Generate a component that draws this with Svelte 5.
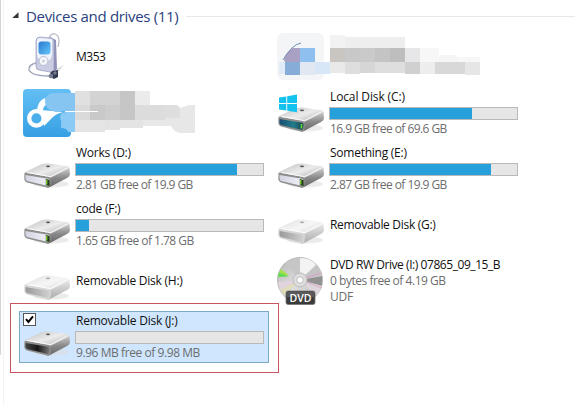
<script>
  const tiles = [
    { icon: 'player', name: 'M353', ls: -0.5 },
    { icon: 'hiddenA' },
    { icon: 'hiddenB' },
    { icon: 'system', name: 'Local Disk (C:)', ls: -0.12, used: 75.7, info: '16.9 GB free of 69.6 GB', infoLs: -0.56 },
    { icon: 'disk', name: 'Works (D:)', ls: -0.25, used: 86, info: '2.81 GB free of 19.9 GB', infoLs: -0.56 },
    { icon: 'disk', name: 'Something (E:)', ls: -0.25, used: 86, info: '2.87 GB free of 19.9 GB', infoLs: -0.56 },
    { icon: 'disk', name: 'code (F:)', ls: -0.25, used: 7, info: '1.65 GB free of 1.78 GB', infoLs: -0.52 },
    { icon: 'removable', name: 'Removable Disk (G:)', ls: -0.3 },
    { icon: 'removable', name: 'Removable Disk (H:)', ls: -0.25 },
    { icon: 'dvd', name: 'DVD RW Drive (I:) 07865_09_15_B', ls: -0.44, info: '0 bytes free of 4.19 GB', infoLs: -0.47, extra: 'UDF' },
    { icon: 'open', name: 'Removable Disk (J:)', ls: -0.22, used: 0, info: '9.96 MB free of 9.98 MB', infoLs: -0.43, selected: true }
  ];
  const mosaicA = [
    [53, 2, 15, 13, '#f2f2f2'], [68, 4, 60, 11, '#eeeeee'], [53, 15, 15, 14, '#c9c6c2'], [68, 15, 15, 14, '#c8c8c8'],
    [83, 15, 15, 14, '#cacaca'], [98, 15, 15, 14, '#c4c4c4'], [113, 15, 15, 14, '#bebebe'], [128, 15, 15, 14, '#e7e7ea'],
    [143, 15, 19, 14, '#f7f7f7'], [38, 29, 15, 12, '#d7e7f7'], [53, 29, 15, 11, '#e9e9e9'], [68, 29, 15, 12, '#dedede'],
    [83, 29, 15, 11, '#d6d6d6'], [98, 29, 30, 11, '#dedede'], [128, 29, 15, 12, '#d0d0d1'], [143, 29, 15, 12, '#ededed'],
    [158, 29, 30, 12, '#d8d8d8'], [188, 29, 15, 13, '#e6e6e6'], [162, 22, 18, 7, '#f5f5f5'], [180, 24, 23, 5, '#f7f7f7']
  ];
  const mosaicB = [
    [52, 2, 15, 14, '#e0e0e0'], [67, 2, 30, 14, '#d3d3d3'], [97, 2, 15, 29, '#c6c6c6'],
    [112, 2, 15, 14, '#ebebeb'], [52, 16, 15, 15, '#dadada'], [67, 16, 15, 15, '#c9c9c9'], [82, 16, 15, 15, '#cdcdcd'],
    [112, 16, 30, 15, '#dcdcdc'], [52, 31, 30, 12, '#e5e5e5'], [82, 31, 15, 10, '#e3e3e3'], [97, 31, 23, 8, '#e4e4e4'],
    [120, 31, 22, 6, '#e8e8e8']
  ];
</script>

{#snippet body(front, tone)}
  <ellipse cx="28" cy="39" rx="18" ry="3.5" fill="#ddd" opacity=".6" />
  <path d="M1 29Q1 27 4 26L18 19.5Q21 18 25 18.5L44 21Q46.5 21.5 46.5 24L28 34Z" fill="url(#top{tone})" />
  <path d="M46.5 23.5L47 29.5Q46.5 31.5 44 33L28 41.5Q26 43 24 42.5L27 33Z" fill="url(#side{tone})" />
  <path d="M1.5 28.5Q2 27.5 5 28L25 31.8Q28 32.5 28 35L27.5 40.5Q27 43 24 42.5L4 37.5Q1.5 37 1.3 34Z" fill={tone === 'L' ? '#d6d6d6' : '#8d8d8d'} />
  <path d="M2.5 30L25 33.8Q26.5 34 26.5 36L26 39.5Q26 41 24 40.8L4 36Q2.5 35.5 2.5 33Z" fill={front} />
  <path d="M4 27.5L26 31.4Q28 31.6 29 31L45 22.5" fill="none" stroke="#fff" stroke-width="1" opacity=".9" />
  <ellipse cx="25" cy="21.3" rx="2.1" ry=".9" fill={tone === 'L' ? '#aaa' : '#555'} />
{/snippet}

<svg class="defs" width="0" height="0">
  <defs>
    <linearGradient id="topD" x1="0" y1="0" x2="1" y2="1"><stop offset="0" stop-color="#bdbdbd" /><stop offset=".5" stop-color="#ececec" /><stop offset="1" stop-color="#a2a2a2" /></linearGradient>
    <linearGradient id="sideD" x1="0" y1="0" x2="0" y2="1"><stop offset="0" stop-color="#c9c9c9" /><stop offset=".5" stop-color="#888" /><stop offset="1" stop-color="#666" /></linearGradient>
    <linearGradient id="topL" x1="0" y1="0" x2="1" y2="1"><stop offset="0" stop-color="#dedede" /><stop offset=".5" stop-color="#f6f6f6" /><stop offset="1" stop-color="#d5d5d5" /></linearGradient>
    <linearGradient id="sideL" x1="0" y1="0" x2="0" y2="1"><stop offset="0" stop-color="#e6e6e6" /><stop offset="1" stop-color="#aaa" /></linearGradient>
    <linearGradient id="silver"><stop offset="0" stop-color="#d4d5e3" /><stop offset="1" stop-color="#f2f2f8" /></linearGradient>
    <linearGradient id="teal"><stop offset="0" stop-color="#184c72" /><stop offset=".6" stop-color="#217d8b" /><stop offset="1" stop-color="#143d48" /></linearGradient>
    <linearGradient id="slotL"><stop offset="0" stop-color="#999" /><stop offset="1" stop-color="#d0d0d0" /></linearGradient>
    <linearGradient id="slotD"><stop offset="0" stop-color="#444" /><stop offset=".5" stop-color="#181818" /><stop offset="1" stop-color="#777" /></linearGradient>
    <linearGradient id="sky" x1="0" y1="0" x2="0" y2="1"><stop offset="0" stop-color="#63bff4" /><stop offset="1" stop-color="#36a0e4" /></linearGradient>
    <linearGradient id="screen" x1="0" y1="0" x2="1" y2="1"><stop offset="0" stop-color="#2879cf" /><stop offset="1" stop-color="#65c7fa" /></linearGradient>
    <linearGradient id="disc" x1="0" y1="0" x2="1" y2="1"><stop offset="0" stop-color="#b4b4b4" /><stop offset=".5" stop-color="#dedede" /><stop offset="1" stop-color="#b8b8b8" /></linearGradient>
  </defs>
</svg>

<main>
  <header>
    <svg width="7" height="7" viewBox="0 0 7 7"><path d="M6.5 .3V6H.3Z" fill="#333" /></svg>
    <h1>Devices and drives (11)</h1>
    <hr />
  </header>
  <section>
    {#each tiles as t}
      <article class:selected={t.selected}>
        {#if t.icon === 'hiddenA'}
          <svg class="wide" width="210" height="48" viewBox="0 0 210 48">
            <rect x="0" y="0" width="47" height="47" rx="6" fill="#f4f5f7" />
            <path d="M7 27Q10 18 16 15H23V29H8Z" fill="#a8a1c4" />
            <path d="M6 27Q9 21 15 15Q19 11 24 10" fill="none" stroke="#7187b1" />
            <rect x="23" y="15" width="15" height="14" fill="#8ebfee" />
            <rect x="2" y="29" width="6" height="12" fill="#e1ebf7" />
            <rect x="8" y="29" width="15" height="13" fill="#86add8" /><rect x="23" y="29" width="15" height="13" fill="#e1e8f1" />
            {#each mosaicA as [x, y, w, h, c]}<rect {x} {y} width={w} height={h} fill={c} />{/each}
          </svg>
        {:else if t.icon === 'hiddenB'}
          <svg class="wide" width="210" height="48" viewBox="0 0 210 48">
            <rect width="48" height="48" rx="4" fill="url(#sky)" />
            <path d="M14 23Q14 12 22 9L25 15Q19 17 20 24Z" fill="#fff" />
            <path d="M18 21L40 23Q32 25 28 30L21 37Z" fill="#fff" />
            <circle cx="13.4" cy="29.4" r="7.2" fill="#4cafec" stroke="#fff" stroke-width="4.3" />
            <path d="M22 12Q23 4 31 4H52V22H39Q35 24 30 22Q22 20 22 12Z" fill="#86c4f1" />
            <path d="M37 28Q37 24 43 23H52V43H45Q44 39 38 39Q39 33 37 28Z" fill="#8bcaf5" />
            {#each mosaicB as [x, y, w, h, c]}<rect {x} {y} width={w} height={h} fill={c} />{/each}
            <path d="M142 16H154L157 19L166 16H172V44H157Q151 43 148 37H142Z" fill="#e7e7e7" />
            <path d="M142 16H154L157 19V29H142Z" fill="#dedede" />
            <rect x="42" y="22" width="33" height="1" fill="#fff" />
          </svg>
        {:else}
          <svg class="icon" width="48" height="48" viewBox="0 0 48 48">
            {#if t.icon === 'player'}
              <path d="M29 38L41 32L37 37L31 41Z" fill="#ddd" />
              <path d="M26 6Q27 0 32 1Q38 3 35 14" fill="none" stroke="#b4b8c8" stroke-width="1.2" />
              <path d="M27 4L33 7L34 36L27 41Z" fill="#9092b8" />
              <path d="M13 8Q13 4 17 4L28 5Q31 5 31 9V36Q31 40 27 39L16 37Q13 37 13 33Z" fill="#c9cce3" stroke="#9298bb" stroke-width=".7" />
              <path d="M14 8Q14 5 17 5L27 6Q30 6 29 10V21Q28 29 21 29Q14 28 14 20Z" fill="#eff3fc" />
              <rect x="15.5" y="8.5" width="12" height="13" rx="3" fill="url(#screen)" />
              <circle cx="20.5" cy="28" r="4.5" fill="#f6f8fc" stroke="#b3b9ce" /><circle cx="20.5" cy="28" r="1.6" fill="#cbd0de" />
              <path d="M13 30Q5 32 6 37Q9 43 26 43" fill="none" stroke="#9da1b6" stroke-width="1.4" />
              <path d="M12 31Q7 33 7 36" fill="none" stroke="#e1e4ee" />
              <path d="M29 38L35 37V44L31 46L26 43Z" fill="#32384f" /><circle cx="28" cy="43" r="2.3" fill="#777d91" /><circle cx="32" cy="40" r="1.7" fill="#777d91" />
            {:else if t.icon === 'dvd'}
              <circle cx="23" cy="23" r="22.5" fill="url(#disc)" stroke="#969696" stroke-width=".6" />
              <path d="M23 23L8 6Q17 0 27 1Z" fill="#c6c6c6" /><path d="M23 23L23 1Q34 1 39 8Z" fill="#f3f3f3" />
              <path d="M23 23L39 8Q43 12 45 18Z" fill="#c4c4c4" /><path d="M23 23L45 19V29Z" fill="#929292" />
              <path d="M23 23L45 29Q43 35 39 39Z" fill="#ded6dd" />
              <path d="M12 18.4L4 12L1.5 17Z" fill="#a6e04f" /><path d="M12 19.5L2 15.5L1 20Z" fill="#5fdd51" />
              <path d="M23 23L1 25L3 33Z" fill="#e1d4de" /><path d="M23 23L3 33L7 38Z" fill="#e1ddba" />
              <path d="M23 23L44 16" stroke="#d99fc7" stroke-width="1.1" /><path d="M23 23L45 31" stroke="#dcaccc" />
              <circle cx="23" cy="23" r="7" fill="#ddd" stroke="#bbb" /><circle cx="23" cy="23" r="3.2" fill="#fff" stroke="#aaa" stroke-width=".7" />
              <rect x="9" y="34" width="29" height="13.5" rx="2" fill="#3b3b3b" stroke="#777" stroke-width=".8" />
              <path d="M10 35H37V40H10Z" fill="#5a5a5a" />
              <text x="12.5" y="45" textLength="22" lengthAdjust="spacingAndGlyphs">DVD</text>
            {:else if t.icon === 'removable'}{@render body('url(#slotL)', 'L')}
            {:else if t.icon === 'open'}{@render body('url(#slotD)', 'D')}
            {:else if t.icon === 'system'}
              {@render body('url(#teal)', 'D')}
              <path d="M24.5 35V39.5" stroke="#63df37" stroke-width="1.6" />
              <path d="M2 8.5L9.3 7.4V14H2ZM10.2 7.2L20 5.5V14H10.2ZM2 15H9.3V21.6L2 20.5ZM10.2 15H20V23.3L10.2 21.8Z" fill="#13c2ee" />
            {:else}
              {@render body('url(#silver)', 'D')}
              <path d="M22.8 34L26.6 35V41L22.8 40.2Z" fill="#253d18" /><path d="M23.7 35V39.5" stroke="#7ccb38" stroke-width="1.4" />
            {/if}
          </svg>
          <div class="text">
            <span class="name" style="letter-spacing: {t.ls}px">{t.name}</span>
            {#if t.used !== undefined}<div class="bar"><i style="width: {t.used}%"></i></div>{/if}
            {#if t.info}<span class="info" style="letter-spacing: {t.infoLs}px">{t.info}</span>{/if}
            {#if t.extra}<span class="info">{t.extra}</span>{/if}
          </div>
        {/if}
        {#if t.selected}
          <svg class="check" width="13" height="13" viewBox="0 0 13 13"><rect x=".5" y=".5" width="12" height="12" fill="#fff" stroke="#555" /><path d="M3 6.2L5.4 9L10 3.3" fill="none" stroke="#000" stroke-width="2" /></svg>
          <div class="frame"></div>
        {/if}
      </article>
    {/each}
  </section>
</main>

<style>
  :global(body) { background: #fff; overflow: hidden; }
  .defs { position: absolute; }
  main { box-sizing: border-box; height: 404px; padding: 5px 0 0 12px; font: 12px/16px "Open Sans", "Noto Sans", sans-serif; background: linear-gradient(#d4d4d4, #d4d4d4) 0 0 / 1px 355px no-repeat, linear-gradient(#f3f3f3, #f3f3f3) 3px 0 / 1px 100% no-repeat; }
  header { display: flex; align-items: center; height: 22px; }
  header svg { margin-top: -1px; }
  h1 { margin: 0 0 0 7px; font-size: 15px; line-height: 22px; font-weight: 400; color: #2b3f80; letter-spacing: -0.33px; white-space: nowrap; }
  hr { flex: 1; margin: 0 0 0 8px; border: 0; border-top: 1px solid #e8e8e8; }
  section { display: grid; grid-template-columns: 250px 250px; grid-auto-rows: 52px; gap: 4px; padding: 4px 0 0 7px; }
  article { position: relative; display: flex; align-items: center; box-sizing: border-box; border: 1px solid transparent; padding-left: 3px; }
  .selected { background: #cfe6fe; border-color: #7da9c8; }
  .icon { flex: none; }
  .wide { flex: none; }
  .text { display: flex; flex-direction: column; margin-left: 4px; width: 189px; flex: none; white-space: nowrap; }
  .name { color: #111; padding-left: 1px; }
  .info { color: #6d6d6d; padding-left: 1px; letter-spacing: -0.25px; }
  .bar { box-sizing: border-box; height: 13px; margin: 2px 0 1px; border: 1px solid #b9b9b9; background: #e6e6e6; }
  .bar i { display: block; height: 11px; background: #26a0da; }
  .check { position: absolute; left: 3px; top: 1px; }
  .frame { position: absolute; left: -10px; top: -9px; width: 267px; height: 68px; border: 1px solid #c9565e; box-sizing: content-box; }
  text { font: 600 10px "Open Sans", sans-serif; fill: #fff; }
</style>
